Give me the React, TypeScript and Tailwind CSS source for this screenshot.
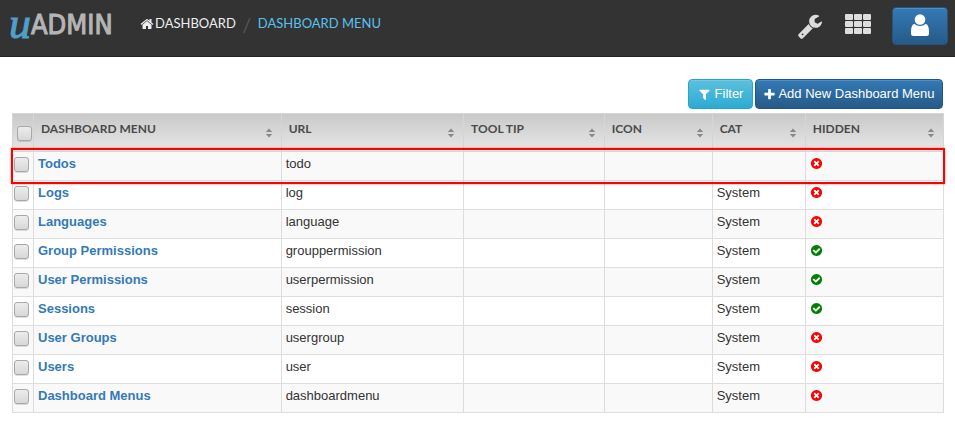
import React from "react";

const CIRCLE =
  "q0 209-103 385.5t-279.5 279.5-385.5 103-385.5-103-279.5-279.5-103-385.5 103-385.5 279.5-279.5 385.5-103 385.5 103 279.5 279.5 103 385.5z";

const ICONS = {
  home: "M1472 992v480q0 26-19 45t-45 19h-384v-384h-256v384h-384q-26 0-45-19t-19-45v-480q0-1 .5-3t.5-3l575-474 575 474q1 2 1 6zm223-69l-62 74q-8 9-21 11h-3q-13 0-21-7l-692-577-692 577q-12 8-24 7-13-2-21-11l-62-74q-8-10-7-23.5t11-21.5l719-599q32-26 76-26t76 26l244 204v-195q0-14 9-23t23-9h192q14 0 23 9t9 23v408l219 182q10 8 11 21.5t-7 23.5z",
  wrench:
    "M448 1472q0-26-19-45t-45-19-45 19-19 45 19 45 45 19 45-19 19-45zm644-420l-682 682q-37 37-90 37-52 0-91-37l-106-108q-38-36-38-90 0-53 38-91l681-681q39 98 114.5 173.5t173.5 114.5zm634-435q0 39-23 106-47 134-164.5 217.5t-258.5 83.5q-185 0-316.5-131.5t-131.5-316.5 131.5-316.5 316.5-131.5q58 0 121.5 16.5t107.5 46.5q16 11 16 28t-16 28l-293 169v224l193 107q5-3 79-48.5t135.5-81 70.5-35.5q15 0 23.5 10t8.5 25z",
  filter:
    "M1595 295q17 41-14 70l-493 493v742q0 42-39 59-13 5-25 5-27 0-45-19l-256-256q-19-19-19-45v-486l-493-493q-31-29-14-70 17-39 59-39h1280q42 0 59 39z",
  plus: "M1600 736v192q0 40-28 68t-68 28h-416v416q0 40-28 68t-68 28h-192q-40 0-68-28t-28-68v-416h-416q-40 0-68-28t-28-68v-192q0-40 28-68t68-28h416v-416q0-40 28-68t68-28h192q40 0 68 28t28 68v416h416q40 0 68 28t28 68z",
  no:
    "M1277 1122q0-26-19-45l-181-181 181-181q19-19 19-45 0-27-19-46l-90-90q-19-19-46-19-26 0-45 19l-181 181-181-181q-19-19-45-19-27 0-46 19l-90 90q-19 19-19 46 0 26 19 45l181 181-181 181q-19 19-19 45 0 27 19 46l90 90q19 19 46 19 26 0 45-19l181-181 181 181q19 19 45 19 27 0 46-19l90-90q19-19 19-46zm387-226" +
    CIRCLE,
  yes:
    "M1412 734q0-28-18-46l-91-90q-19-19-45-19t-45 19l-408 407-226-226q-19-19-45-19t-45 19l-91 90q-18 18-18 46 0 27 18 45l362 362q19 19 45 19 27 0 46-19l543-543q18-18 18-45zm252 162" +
    CIRCLE,
};

function Icon({ name, className }: { name: keyof typeof ICONS; className: string }) {
  return (
    <svg viewBox="0 0 1792 1792" fill="currentColor" aria-hidden="true" className={className}>
      <path d={ICONS[name]} />
    </svg>
  );
}

function SortArrows() {
  return (
    <svg viewBox="0 0 8 10" fill="#888" aria-hidden="true" className="mt-3 h-[10px] w-2 shrink-0">
      <path d="M4 0.5 7.2 4H0.8zM4 9.5 0.8 6h6.4z" />
    </svg>
  );
}

function Tick({ label }: { label: string }) {
  return (
    <input
      type="checkbox"
      aria-label={label}
      className="block size-[15px] appearance-none rounded-[3px] border border-[#a8a8a8] bg-linear-to-b from-[#ececec] to-[#d8d8d8] shadow-[0_1px_0_rgba(0,0,0,0.12)] checked:bg-[#337ab7]"
    />
  );
}

const COLUMNS = ["DASHBOARD MENU", "URL", "TOOL TIP", "ICON", "CAT", "HIDDEN"];

const ROWS = [
  { name: "Todos", url: "todo", cat: "", hidden: false },
  { name: "Logs", url: "log", cat: "System", hidden: false },
  { name: "Languages", url: "language", cat: "System", hidden: false },
  { name: "Group Permissions", url: "grouppermission", cat: "System", hidden: true },
  { name: "User Permissions", url: "userpermission", cat: "System", hidden: true },
  { name: "Sessions", url: "session", cat: "System", hidden: true },
  { name: "User Groups", url: "usergroup", cat: "System", hidden: false },
  { name: "Users", url: "user", cat: "System", hidden: false },
  { name: "Dashboard Menus", url: "dashboardmenu", cat: "System", hidden: false },
];

const CELL = "border border-[#ddd] px-1 py-0 align-top leading-6";

export default function App() {
  return (
    <div className="bg-white font-['Liberation_Sans',Arial,sans-serif] text-[13px] text-[#333]">
      <header className="flex h-[57px] items-start justify-between border-b border-[#222] bg-[#333] pr-[7px] pl-[9px]">
        <div className="flex items-start">
          <a href="#" aria-label="uADMIN" className="flex h-12 w-[104px] items-center whitespace-nowrap">
            <span className="font-['Liberation_Serif',serif] text-[44px] leading-none text-[#4f9fcb] italic [-webkit-text-stroke:1px_#4f9fcb]">u</span>
            <span className="font-['DejaVu_Sans_Condensed','DejaVu_Sans',sans-serif] text-[27px] leading-none text-[#b5b5b5] [-webkit-text-stroke:1px_#b5b5b5]">ADMIN</span>
          </a>
          <nav aria-label="Breadcrumb" className="flex h-12 items-center pl-[27px] font-[Lato,sans-serif] text-[13px]">
            <a href="#" className="flex items-center gap-px text-[#eee]">
              <Icon name="home" className="size-[14px]" />
              DASHBOARD
            </a>
            <span className="w-[22px] text-center text-[20px] text-[#555]">/</span>
            <a href="#" className="text-[#5bc0f0]">DASHBOARD MENU</a>
          </nav>
        </div>
        <div className="flex h-[52px] items-center">
          <button type="button" aria-label="Tools" className="text-[#ddd]">
            <Icon name="wrench" className="size-[26px]" />
          </button>
          <button type="button" aria-label="Apps" className="ml-[22px] pb-1 text-[#ddd]">
            <svg viewBox="0 0 26 20" fill="currentColor" aria-hidden="true" className="h-5 w-[26px]">
              {[0, 9, 18].map((x) =>
                [0, 7, 14].map((y) => <rect key={x + "-" + y} x={x} y={y} width="8" height="6" rx="1" />)
              )}
            </svg>
          </button>
          <button
            type="button"
            aria-label="Account"
            className="ml-[21px] flex h-[38px] w-14 items-center justify-center rounded border border-[#245580] bg-linear-to-b from-[#337ab7] to-[#265a88] pb-0.5 text-white shadow-[inset_0_1px_0_rgba(255,255,255,0.15)]"
          >
            <svg viewBox="0 0 18 22" fill="currentColor" aria-hidden="true" className="h-[22px] w-[18px]">
              <circle cx="9" cy="5.5" r="5.3" />
              <path d="M3.2 9.8Q0 11.500 0 17v2.500Q0 22 2.500 22h13q2.500 0 2.500-2.500V17q0-5.500-3.200-7.200Q12.300 12 9 12T3.200 9.800z" />
            </svg>
          </button>
        </div>
      </header>

      <main className="pt-[22px] pr-[11px] pl-3">
        <div className="flex justify-end gap-0.5 pr-px">
          <button
            type="button"
            className="flex h-[30px] w-[65px] items-center justify-center gap-1 rounded border border-[#28a4c9] bg-linear-to-b from-[#5bc0de] to-[#2aabd2] text-white shadow-[inset_0_1px_0_rgba(255,255,255,0.15)]"
          >
            <Icon name="filter" className="size-[13px]" />
            Filter
          </button>
          <button
            type="button"
            className="flex h-[30px] w-[188px] items-center justify-center gap-0.5 rounded border border-[#245580] bg-linear-to-b from-[#337ab7] to-[#265a88] whitespace-nowrap text-white shadow-[inset_0_1px_0_rgba(255,255,255,0.15)]"
          >
            <Icon name="plus" className="size-[13px]" />
            Add New Dashboard Menu
          </button>
        </div>

        <div className="relative mt-1">
          <table className="w-full table-fixed border-collapse">
            <colgroup>
              <col className="w-[21px]" />
              <col className="w-[26.6%]" />
              <col className="w-[19.6%]" />
              <col className="w-[15.1%]" />
              <col className="w-[11.6%]" />
              <col className="w-[10%]" />
              <col />
            </colgroup>
            <thead>
              <tr className="h-[38px] bg-linear-to-b from-[#c9c9c9] to-[#e8e8e8]">
                <th className="border border-[#d6d6d6] pt-3 pl-1 align-top">
                  <Tick label="Select all" />
                </th>
                {COLUMNS.map((title) => (
                  <th key={title} className="border border-[#d6d6d6] pt-0.5 pr-2 pl-[7px] text-left align-top">
                    <div className="flex items-start justify-between">
                      <span className="pt-1 font-[Lato,sans-serif] text-[12px] leading-[18px] font-bold whitespace-nowrap text-[#4a4a4a]">
                        {title}
                      </span>
                      <SortArrows />
                    </div>
                  </th>
                ))}
              </tr>
            </thead>
            <tbody>
              {ROWS.map((row) => (
                <tr key={row.name} className="h-[29px] odd:bg-[#f9f9f9]">
                  <td className="border border-[#ddd] py-0 pt-[5px] pl-px align-top">
                    <Tick label={"Select " + row.name} />
                  </td>
                  <td className={CELL}>
                    <a href="#" className="font-bold text-[#337ab7]">{row.name}</a>
                  </td>
                  <td className={CELL}>{row.url}</td>
                  <td className={CELL}></td>
                  <td className={CELL}></td>
                  <td className={CELL}>{row.cat}</td>
                  <td className={CELL}>
                    <span role="img" aria-label={row.hidden ? "Yes" : "No"} className="flex h-[22px] items-center">
                      {row.hidden ? (
                        <Icon name="yes" className="size-[13px] text-[#008000]" />
                      ) : (
                        <Icon name="no" className="size-[13px] text-[#f00]" />
                      )}
                    </span>
                  </td>
                </tr>
              ))}
            </tbody>
          </table>
          <div className="pointer-events-none absolute top-[35px] -right-px -left-px h-9 border-2 border-[#f00] shadow-[0_0_2px_rgba(255,0,0,0.5)]" />
        </div>
      </main>
    </div>
  );
}
